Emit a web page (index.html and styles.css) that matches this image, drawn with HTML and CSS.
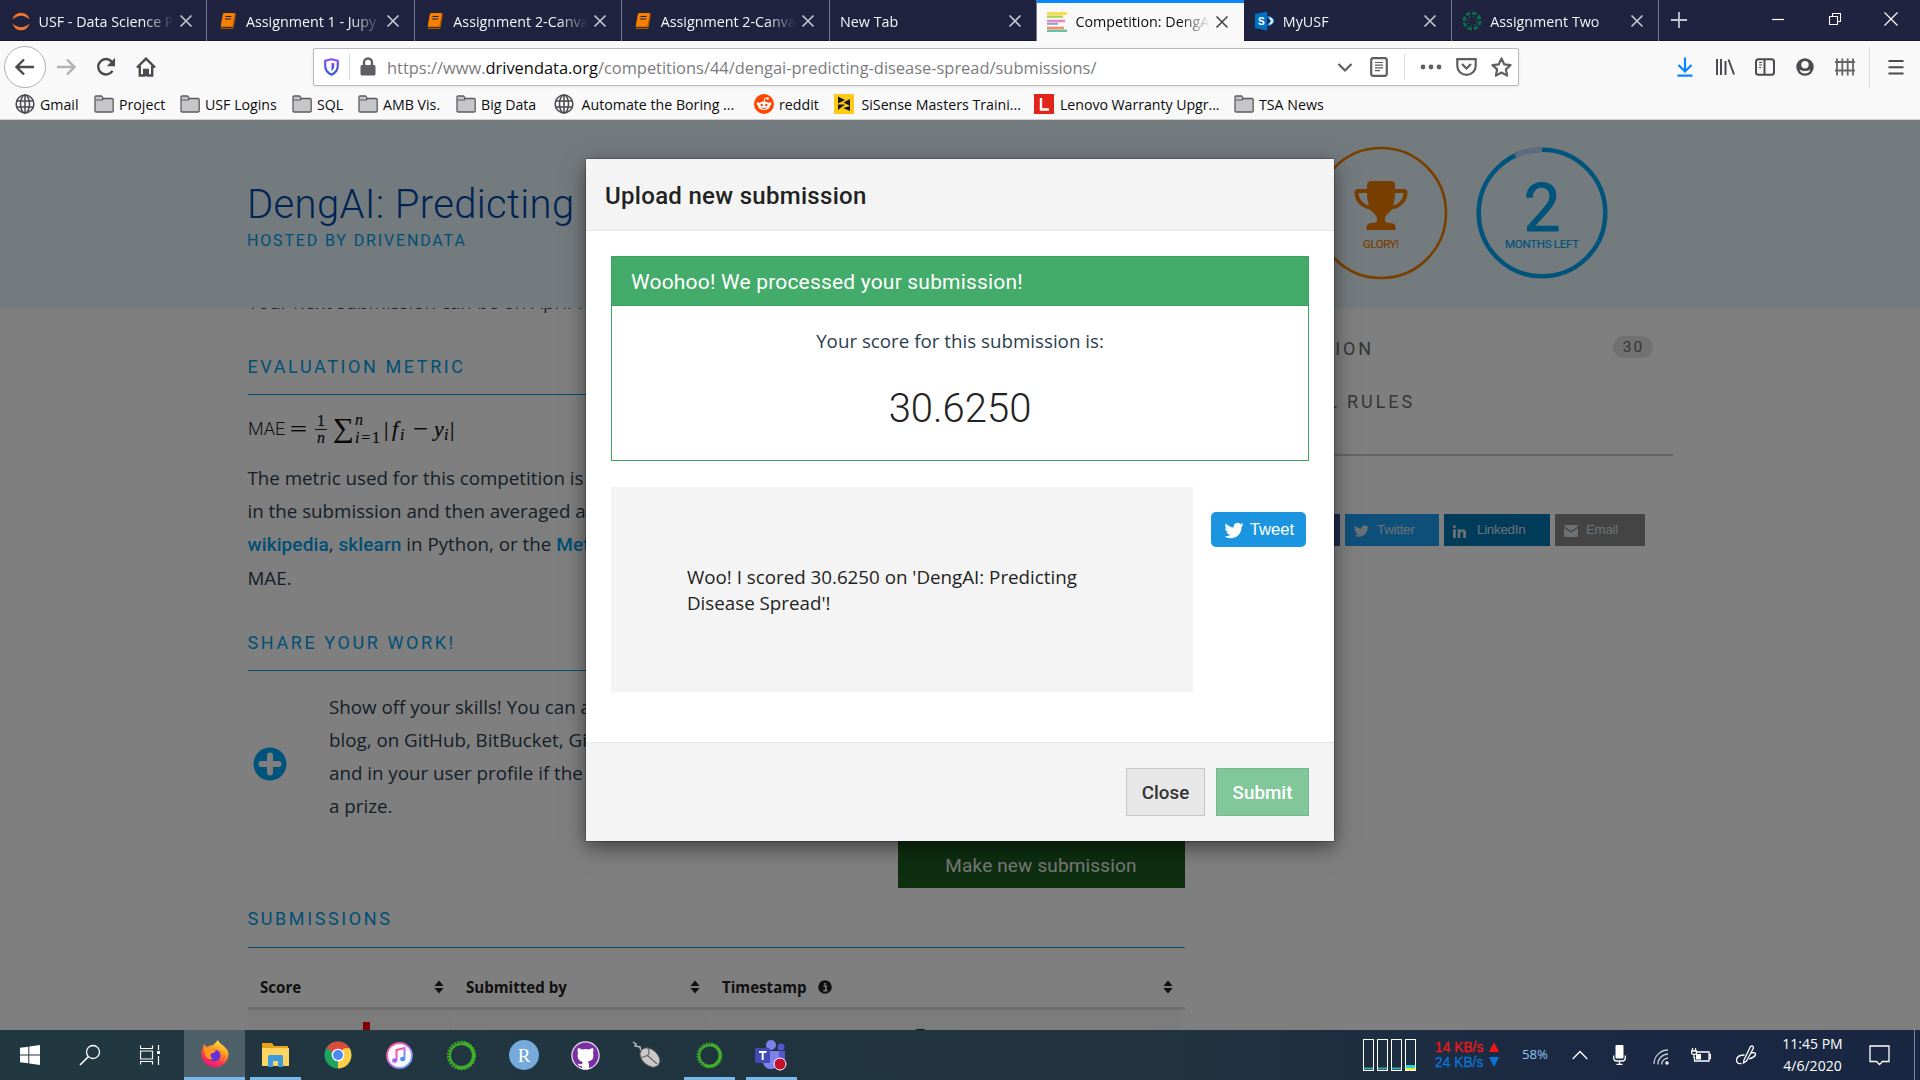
FILE: index.html
```html
<!DOCTYPE html>
<html lang="en">
<head>
<meta charset="utf-8">
<title>Competition: DengAI</title>
<link rel="stylesheet" href="styles.css">
</head>
<body>
<svg class="defs" width="0" height="0" aria-hidden="true">
  <defs>
    <symbol id="x" viewBox="0 0 16 16"><path d="M2.5 2.5l11 11M13.5 2.5l-11 11" fill="none" stroke="currentColor" stroke-width="1.7"/></symbol>
    <symbol id="book" viewBox="0 0 20 20"><g transform="translate(2 0) skewX(-10)"><rect x="3.5" y="2" width="13" height="16" rx="2" fill="#b85c00"/><rect x="3.5" y="2" width="11.5" height="13.5" rx="1" fill="#f77f00"/><path d="M6.5 5.5h6M6.5 8h6" stroke="#202340" stroke-width="1.1"/><path d="M4.5 16.6h10.5" stroke="#202340" stroke-width=".9"/></g></symbol>
    <symbol id="folder" viewBox="0 0 20 20"><path d="M1 17V3q0-1 1-1h5q1 0 1.300.8L9 4.500h9q1.200 0 1.200 1.200V17q0 1-1.200 1H2.200Q1 18 1 17z" fill="#c6c6c8" stroke="#5c5c5f" stroke-width="1.300"/><path d="M1.600 6h6.500l1.400-1.300" fill="none" stroke="#5c5c5f" stroke-width="1.200"/></symbol>
    <symbol id="globe" viewBox="0 0 20 20"><g fill="none" stroke="#4a4a4f" stroke-width="1.500"><circle cx="10" cy="10" r="8.900"/><ellipse cx="10" cy="10" rx="4.500" ry="8.900"/><path d="M10 1v18M1.200 7h17.600M1.200 13h17.600"/></g></symbol>
    <symbol id="bird" viewBox="0 0 24 24"><path fill="currentColor" d="M23.950 4.570a10 10 0 01-2.820.770 4.960 4.960 0 002.160-2.720c-.950.550-2 .960-3.130 1.180a4.920 4.920 0 00-8.380 4.480C7.690 8.090 4.070 6.130 1.640 3.160a4.820 4.820 0 00-.670 2.480c0 1.710.870 3.210 2.190 4.100a4.900 4.900 0 01-2.230-.620v.060a4.920 4.920 0 003.950 4.830 5 5 0 01-2.210.080 4.940 4.940 0 004.600 3.420A9.870 9.870 0 010 19.540a14 14 0 007.550 2.210c9.050 0 14-7.500 14-13.980 0-.210 0-.420-.020-.630a9.940 9.940 0 002.460-2.550z"/></symbol>
    <symbol id="ring" viewBox="0 0 34 34"><circle cx="17" cy="17" r="12.800" fill="none" stroke="#3a9d2c" stroke-width="4.600" stroke-dasharray="2.200 .9"/><circle cx="17" cy="17" r="12" fill="none" stroke="#43b02a" stroke-width="1.600"/><path d="M19 3.500A13.500 13.500 0 1 1 12 29.500A12 12 0 1 0 19 3.500z" fill="#43b02a" stroke="#43b02a" stroke-width="2"/></symbol>
  </defs>
</svg>

<header class="tabs">
  <div class="tab"><svg class="fav" viewBox="0 0 20 20"><path d="M1.500 8.500a8.700 8.700 0 0 1 17 0Q10 1 1.500 8.500zM1.500 12.500a8.700 8.700 0 0 0 17 0Q10 20 1.500 12.500z" fill="#f37726"/></svg><span class="label">USF - Data Science P</span><svg class="close"><use href="#x"/></svg></div>
  <div class="tab"><svg class="fav"><use href="#book"/></svg><span class="label">Assignment 1 - Jupy</span><svg class="close"><use href="#x"/></svg></div>
  <div class="tab"><svg class="fav"><use href="#book"/></svg><span class="label">Assignment 2-Canva</span><svg class="close"><use href="#x"/></svg></div>
  <div class="tab"><svg class="fav"><use href="#book"/></svg><span class="label">Assignment 2-Canva</span><svg class="close"><use href="#x"/></svg></div>
  <div class="tab"><span class="label wide">New Tab</span><svg class="close"><use href="#x"/></svg></div>
  <div class="tab active"><svg class="fav" viewBox="0 0 20 20"><path d="M0 1.500h20" stroke="#fed92f" stroke-width="2.600"/><path d="M0 4.700h16" stroke="#a6d854" stroke-width="2.400"/><path d="M0 9h18" stroke="#e78ac3" stroke-width="2.600"/><path d="M0 11.800h11" stroke="#8da0cb" stroke-width="2"/><path d="M0 16h17" stroke="#fc8d62" stroke-width="2.600"/><path d="M0 18.800h20" stroke="#66c2a5" stroke-width="2.400"/></svg><span class="label">Competition: DengA</span><svg class="close"><use href="#x"/></svg></div>
  <div class="tab"><svg class="fav" viewBox="0 0 20 20"><path d="M0 3l12-2.500v19L0 17z" fill="#0072c6"/><text x="3" y="14" class="fav-letter">S</text><path d="M12.500 5.500c4 0 6 2 6.500 4.500-.5 2.500-2.500 4.500-6.500 4.500l3-4.500z" fill="#dcecf9" stroke="#0072c6"/></svg><span class="label">MyUSF</span><svg class="close"><use href="#x"/></svg></div>
  <div class="tab"><svg class="fav" viewBox="0 0 20 20"><circle cx="10" cy="10" r="8" fill="none" stroke="#0b6e4b" stroke-width="3" stroke-dasharray="4.300 1.980"/><circle cx="10" cy="10" r="4.600" fill="none" stroke="#0b6e4b" stroke-width="1.400" stroke-dasharray="1.400 2.210"/></svg><span class="label">Assignment Two</span><svg class="close"><use href="#x"/></svg></div>
  <svg class="plus" viewBox="0 0 20 20"><path d="M10 1v18M1 10h18" stroke="#c4c5cf" stroke-width="2"/></svg>
  <div class="window-controls">
    <svg viewBox="0 0 14 14"><path d="M1 7.500h12" stroke="#fff" stroke-width="1.200"/></svg>
    <svg viewBox="0 0 14 14"><path d="M1.500 4.500h8v8h-8zM4.500 4V1.500h8v8H10" fill="none" stroke="#fff" stroke-width="1.100"/></svg>
    <svg viewBox="0 0 14 14"><path d="M.5.5l13 13M13.500.5l-13 13" stroke="#fff" stroke-width="1.200"/></svg>
  </div>
</header>

<nav class="toolbar">
  <span class="back"><svg class="i20" viewBox="0 0 20 20"><path d="M19 10H2M9 2.500L1.500 10 9 17.500" class="ln thick"/></svg></span>
  <span class="tool faded"><svg class="i20" viewBox="0 0 20 20"><path d="M1 10h17M11 2.500l7.500 7.500-7.500 7.500" class="ln thick"/></svg></span>
  <span class="tool"><svg class="i20" viewBox="0 0 20 20"><path d="M16.500 13.800A7.700 7.700 0 1 1 16 5" class="ln thick"/><path d="M19 .8v8.400h-8.200z" fill="#4a4a4f"/></svg></span>
  <span class="tool"><svg class="i20" viewBox="0 0 20 20"><path d="M1 10.500L10 1.600l9 8.900M3.800 9v9.500h4.400v-5.500h3.600v5.500h4.400V9" class="ln thick"/><rect x="8.800" y="14" width="2.400" height="5" fill="#4a4a4f"/></svg></span>
  <div class="url">
    <span class="cell w34"><svg width="17" height="18" viewBox="0 0 17 18"><defs><linearGradient id="sh" x1="0" y1="0" x2="0" y2="1"><stop offset="0" stop-color="#8a4dfd"/><stop offset="1" stop-color="#2f57d6"/></linearGradient></defs><path d="M8.500 1.200l6.300 1.600v4.700c0 4.500-2.500 7.500-6.300 9.200C4.700 15 2.200 12 2.200 7.500V2.800z" fill="none" stroke="url(#sh)" stroke-width="2.200" stroke-linejoin="round"/><path d="M8.500 4.800v8.400c1.700-1.300 2.800-3 2.800-5.600V5.300z" fill="url(#sh)"/></svg></span>
    <i class="divider"></i>
    <span class="cell w34"><svg width="16" height="19" viewBox="0 0 16 19"><path d="M4 9V5.500a4 4 0 0 1 8 0V9" fill="none" stroke="#5f5f63" stroke-width="2.400"/><rect x=".5" y="8" width="15" height="10.500" rx="1.500" fill="#5f5f63"/></svg></span>
    <span class="address">https://www.<b>drivendata.org</b>/competitions/44/dengai-predicting-disease-spread/submissions/</span>
    <span class="cell w35"><svg width="16" height="16" viewBox="0 0 16 16"><path d="M1.500 5L8 11.500 14.500 5" class="ln gray"/></svg></span>
    <span class="cell w34"><svg width="18" height="20" viewBox="0 0 18 20"><rect x="1.200" y="1.200" width="15.600" height="17.600" rx="2" class="ln gray"/><path d="M5 5.500h8M5 8.200h8M5 10.900h8M5 13.600h5" stroke="#5f5f63" stroke-width="1.200"/></svg></span>
    <i class="divider spaced"></i>
    <span class="cell w36"><svg width="22" height="6" viewBox="0 0 22 6"><g fill="#5f5f63"><circle cx="3" cy="3" r="2.400"/><circle cx="11" cy="3" r="2.400"/><circle cx="19" cy="3" r="2.400"/></g></svg></span>
    <span class="cell w35"><svg width="21" height="18" viewBox="0 0 21 18"><path d="M1.300 1.200h18.400V8a9.200 8.800 0 0 1-18.400 0zM6 6l4.500 4.500L15 6" class="ln gray"/></svg></span>
    <span class="cell w34"><svg width="21" height="20" viewBox="0 0 21 20"><path d="M10.500 1.500l2.700 5.800 6.300.8-4.600 4.300 1.200 6.200-5.600-3.100-5.600 3.100 1.200-6.200L1.500 8.100l6.300-.8z" class="ln gray" stroke-linejoin="round"/></svg></span>
  </div>
  <div class="right-tools">
    <span class="tool"><svg class="i20" viewBox="0 0 20 20"><path d="M10 .5v14M3.500 8l6.500 6.500L16.500 8M2.500 18.700h15" fill="none" stroke="#0a84ff" stroke-width="2.200"/></svg></span>
    <span class="tool"><svg class="i20" viewBox="0 0 20 20"><path d="M2 2v16M6 2v16M10.500 4v14M13.500 2.500L19 17.500" class="ln"/></svg></span>
    <span class="tool"><svg class="i20" viewBox="0 0 20 20"><rect x="1" y="2.200" width="18" height="15.600" rx="2.500" class="ln"/><path d="M9.500 2v16" class="ln"/><path d="M4 5.500h3M4 8h3M4 10.500h2" stroke="#4a4a4f" stroke-width="1.200"/></svg></span>
    <span class="tool"><svg class="i20" viewBox="0 0 20 20"><circle cx="10" cy="10" r="8.700" fill="#4a4a4f"/><circle cx="10" cy="7.800" r="3.700" fill="#f9f9fa"/><path d="M4.500 12.500q1 4 5.500 4t5.500-4q-2.500 1.500-5.500 1.500t-5.500-1.500z" fill="#f9f9fa"/></svg></span>
    <span class="tool"><svg class="i20" viewBox="0 0 20 20"><path d="M2 1.500v17M7.300 1.500v17M12.700 1.500v17M18 1.500v17M0 5h20M0 13.500h20" stroke="#66666a" stroke-width="1.800"/></svg></span>
    <i class="divider tall"></i>
    <span class="tool"><svg width="16" height="16" viewBox="0 0 16 16"><path d="M.5 2h15M.5 8.200h15M.5 14.500h15" class="ln"/></svg></span>
  </div>
</nav>

<nav class="bookmarks">
  <span><svg><use href="#globe"/></svg>Gmail</span>
  <span><svg><use href="#folder"/></svg>Project</span>
  <span><svg><use href="#folder"/></svg>USF Logins</span>
  <span><svg><use href="#folder"/></svg>SQL</span>
  <span><svg><use href="#folder"/></svg>AMB Vis.</span>
  <span><svg><use href="#folder"/></svg>Big Data</span>
  <span class="site"><svg><use href="#globe"/></svg>Automate the Boring ...</span>
  <span><svg viewBox="0 0 20 20"><circle cx="10" cy="10" r="10" fill="#ff4500"/><ellipse cx="10" cy="11.800" rx="6" ry="4.300" fill="#fff"/><circle cx="4.200" cy="9.800" r="1.600" fill="#fff"/><circle cx="15.800" cy="9.800" r="1.600" fill="#fff"/><circle cx="13.700" cy="4.500" r="1.300" fill="#fff"/><path d="M10 8l.8-4 3 .7" fill="none" stroke="#fff"/><circle cx="7.700" cy="11" r="1.200" fill="#ff4500"/><circle cx="12.300" cy="11" r="1.200" fill="#ff4500"/><path d="M7.500 13.800q2.500 1.600 5 0" fill="none" stroke="#ff4500"/></svg>reddit</span>
  <span class="site"><svg viewBox="0 0 20 20"><rect width="20" height="20" fill="#ffc915"/><path d="M4 2.500l7 3.500-7 3.500zM16 5v7L9.500 8.500zM4 10.500h7L4 16zM9 14l7-2v5z" fill="#191919"/></svg>SiSense Masters Traini...</span>
  <span class="site tight"><svg viewBox="0 0 20 20"><rect width="20" height="20" fill="#e1251b"/><path d="M7 4v11.500h8" fill="none" stroke="#fff" stroke-width="2.400"/></svg>Lenovo Warranty Upgr...</span>
  <span><svg><use href="#folder"/></svg>TSA News</span>
</nav>

<main class="viewport">
  <section class="banner">
    <div class="heading">
      <h1>DengAI: Predicting</h1>
      <p class="host">HOSTED BY DRIVENDATA</p>
    </div>
    <div class="badges">
      <svg width="134" height="134" viewBox="0 0 134 134"><circle cx="67" cy="67" r="65" fill="none" stroke="#f08000" stroke-width="2.600"/>
        <path fill="#ee7c00" d="M57.500 35h19q4.500 0 4.500 4.500V43h9q3.500 0 3.500 3.500c0 9-6.500 15.500-15.500 17-3 3.500-7 5.500-7 9.500 0 4.500 2 3.500 6 4 3 .5 4.500 2 4.500 4.500V84h-29v-2.500c0-2.500 1.500-4 4.500-4.500 4-.5 6 .5 6-4 0-4-4-6-7-9.500-9-1.500-15.500-8-15.500-17Q40.500 43 44 43h9v-3.500q0-4.500 4.500-4.500zM44.500 47c.5 6 4 11 10.500 12.500-1.500-4-2-8-2-12.500zM89.500 47H81c0 4.500-.5 8.500-2 12.500C85.500 58 89 53 89.500 47z"/>
        <text x="67" y="102" class="badge-text orange" textLength="36">GLORY!</text></svg>
      <svg width="134" height="134" viewBox="0 0 134 134"><circle cx="67" cy="67" r="63.300" fill="none" stroke="#00a6f5" stroke-width="4.500"/><path d="M40.300 9.600A63.300 63.300 0 0 1 67 3.700" fill="none" stroke="#b9d8ff" stroke-width="4.700"/>
        <text x="67" y="84.500" class="days">2</text>
        <text x="67" y="101.500" class="badge-text blue" textLength="74">MONTHS LEFT</text></svg>
    </div>
  </section>

  <div class="columns">
    <article class="content">
      <p class="next">Your next submission can be on April 7</p>
      <h2>EVALUATION METRIC</h2>
      <svg class="formula" width="220" height="40" viewBox="0 0 220 40">
        <text x="0" y="27" class="mae">MAE</text>
        <text x="42" y="28" class="math" textLength="17" lengthAdjust="spacingAndGlyphs">=</text>
        <text x="69" y="18" class="math small">1</text><path d="M67 21.500h12" stroke="#222"/><text x="69" y="35" class="math small it">n</text>
        <text x="85" y="29" class="math sum" textLength="21" lengthAdjust="spacingAndGlyphs">∑</text>
        <text x="107" y="17" class="math small it">n</text><text x="107" y="35" class="math small" textLength="25"><tspan class="it">i</tspan>=1</text>
        <text x="136" y="28" class="math">|</text><text x="144" y="28" class="math it">f</text><text x="152" y="32" class="math small it">i</text>
        <text x="165" y="28" class="math" textLength="15" lengthAdjust="spacingAndGlyphs">−</text><text x="186" y="28" class="math it">y</text><text x="196" y="32" class="math small it">i</text><text x="202" y="28" class="math">|</text>
      </svg>
      <p class="body">The metric used for this competition is<br>in the submission and then averaged a<br><a>wikipedia</a>, <a>sklearn</a> in Python, or the <a>Met</a><br>MAE.</p>
      <h2 class="second">SHARE YOUR WORK!</h2>
      <div class="share-row">
        <svg width="34" height="34" viewBox="0 0 34 34"><circle cx="17" cy="17" r="16.500" fill="#00a6f5"/><path d="M17 8.500v17M8.500 17h17" stroke="#fff" stroke-width="6" stroke-linecap="round"/></svg>
        <p class="body">Show off your skills! You can a<br>blog, on GitHub, BitBucket, Gi<br>and in your user profile if the<br>a prize.</p>
      </div>
      <button class="make">Make new submission</button>
      <h2 class="third">SUBMISSIONS</h2>
      <div class="table">
        <div class="th">Score<svg width="10" height="14" viewBox="0 0 10 14"><path d="M5 .5L9.600 6H.4zM5 13.500L9.600 8H.4z"/></svg></div>
        <div class="th">Submitted by<svg width="10" height="14" viewBox="0 0 10 14"><path d="M5 .5L9.600 6H.4zM5 13.500L9.600 8H.4z"/></svg></div>
        <div class="th">Timestamp<svg class="info" width="14" height="14" viewBox="0 0 14 14"><circle cx="7" cy="7" r="6.800"/><path d="M5.500 6H8v4.500M5.300 10.700h4M7 3v1.700" fill="none" stroke="#fff" stroke-width="1.600"/></svg><svg class="last" width="10" height="14" viewBox="0 0 10 14"><path d="M5 .5L9.600 6H.4zM5 13.500L9.600 8H.4z"/></svg></div>
        <div class="td"><i class="mark"></i></div>
        <div class="td"></div>
        <div class="td"><i class="curl"></i></div>
      </div>
    </article>

    <aside class="sidebar">
      <div class="side-link"><span class="short">ION</span><em>30</em></div>
      <div class="side-link"><span class="long">L RULES</span></div>
      <hr>
      <div class="share">
        <span class="fb"></span>
        <span class="tw"><svg width="15" height="14" viewBox="0 0 24 24" preserveAspectRatio="none"><use href="#bird"/></svg>Twitter</span>
        <span class="li"><svg width="13" height="13" viewBox="0 0 13 13"><path d="M0 4.300h2.800V13H0zM4.600 4.300h2.700v1.200c1.200-2 5.700-2 5.700 2V13h-2.800V8.500c0-2.400-2.800-2.200-2.800 0V13H4.600z" fill="currentColor"/><circle cx="1.400" cy="1.500" r="1.500" fill="currentColor"/></svg>LinkedIn</span>
        <span class="em"><svg width="14" height="12" viewBox="0 0 14 12"><path d="M1.500 0h11Q14 0 14 1.500L7 6 0 1.500Q0 0 1.500 0zM0 3.200L7 7.700l7-4.500v7.300Q14 12 12.500 12h-11Q0 12 0 10.500z" fill="currentColor"/></svg>Email</span>
      </div>
    </aside>
  </div>

  <div class="backdrop">
    <section class="modal">
      <h3>Upload new submission</h3>
      <div class="modal-body">
        <div class="panel">
          <div class="panel-head">Woohoo! We processed your submission!</div>
          <p class="score-label">Your score for this submission is:</p>
          <p class="score">30.6250</p>
        </div>
        <div class="tweet-row">
          <p class="quote">Woo! I scored 30.6250 on 'DengAI: Predicting<br>Disease Spread'!</p>
          <button class="tweet"><svg width="20" height="19"><use href="#bird"/></svg>Tweet</button>
        </div>
      </div>
      <footer>
        <button class="btn-close">Close</button>
        <button class="btn-submit">Submit</button>
      </footer>
    </section>
  </div>
</main>

<footer class="taskbar">
  <div class="launch">
    <span class="sys"><svg width="20" height="20" viewBox="0 0 20 20"><path d="M0 2.800L8.300 1.700v7.800H0zM9.300 1.500L20 0v9.500H9.300zM0 10.500h8.300v7.800L0 17.200zM9.300 10.500H20V20L9.300 18.500z" fill="#fff"/></svg></span>
    <span class="sys"><svg width="22" height="22" viewBox="0 0 22 22"><circle cx="14" cy="8" r="6.500" fill="none" stroke="#fff" stroke-width="1.300"/><path d="M9.500 12.500L1 21" stroke="#fff" stroke-width="1.600"/></svg></span>
    <span class="sys"><svg width="20" height="20" viewBox="0 0 20 20"><path d="M.5.5v3h12v-3M.5 19.500v-3h12v3M.5 6h12v8H.5zM18.500 0v5M18.500 11v9" fill="none" stroke="#fff" stroke-width="1.200"/><rect x="17" y="6" width="3" height="3" fill="#fff"/></svg></span>
    <span class="app current"><svg width="30" height="30" viewBox="0 0 30 30"><defs><linearGradient id="ff" x1=".8" y1="0" x2=".3" y2="1"><stop offset="0" stop-color="#fff44f"/><stop offset=".35" stop-color="#ffa420"/><stop offset=".7" stop-color="#ff3a4c"/><stop offset="1" stop-color="#e31587"/></linearGradient></defs><path d="M18 0c1 4 8 6 10.300 12A13.500 13.500 0 1 1 2 10l2-6 2.500 3L10 5.500c3 .5 4.500-2 8-5.500z" fill="url(#ff)"/><circle cx="14.500" cy="15.500" r="6" fill="#6a2fd8"/><path d="M4 8q5-2 7 1l5 1q-1 3-5 3.500-1.500 4 2 5.500-7 1-8-5z" fill="#ff9a1f"/></svg></span>
    <span class="app open"><svg width="29" height="26" viewBox="0 0 29 26"><path d="M1 1h10l2 3h14v7H1z" fill="#e8a317"/><rect x="1" y="6" width="27" height="18" fill="#fcd462"/><path d="M7 25V14.500q0-1.500 1.500-1.500h12q1.500 0 1.500 1.500V25h-5v-6h-5v6z" fill="#3f9be0"/></svg></span>
    <span class="app"><svg width="28" height="28" viewBox="0 0 28 28"><circle cx="14" cy="14" r="13.500" fill="#1da462"/><path d="M14 14L2.300 7.300A13.500 13.500 0 0 1 25.700 7.300z" fill="#dd4b3e"/><path d="M14 14l6-6.700h5.700A13.500 13.500 0 0 1 14 27.500z" fill="#ffcd46"/><circle cx="14" cy="14" r="6.300" fill="#fff"/><circle cx="14" cy="14" r="5" fill="#4a8af4"/></svg></span>
    <span class="app"><svg width="27" height="27" viewBox="0 0 27 27"><defs><linearGradient id="it" x1="0" y1="0" x2="1" y2="1"><stop offset="0" stop-color="#ff4f7b"/><stop offset=".5" stop-color="#c868f0"/><stop offset="1" stop-color="#3db8f7"/></linearGradient></defs><circle cx="13.500" cy="13.500" r="12.500" fill="#fbf7fb" stroke="url(#it)" stroke-width="1.800"/><path d="M10.500 18V8l8-2v10.500" fill="none" stroke="url(#it)" stroke-width="2"/><ellipse cx="8.700" cy="18.500" rx="2.600" ry="2.200" fill="#b060ee"/><ellipse cx="16.700" cy="17" rx="2.600" ry="2.200" fill="#4b8ff5"/></svg></span>
    <span class="app"><svg width="33" height="33"><use href="#ring"/></svg></span>
    <span class="app"><svg width="30" height="30" viewBox="0 0 30 30"><circle cx="15" cy="15" r="15" fill="#75aadb"/><text x="15" y="21.500" class="r-logo">R</text></svg></span>
    <span class="app"><svg width="29" height="29" viewBox="0 0 29 29"><circle cx="14.500" cy="14.500" r="13.600" fill="#7b2fa5" stroke="#e9dcf1" stroke-width="1.300"/><path d="M7 7q2 0 4 1.500 3.500-1 7 0Q20 7 22 7q1 3 0 4.500 2 8-5 9 1 1.500 1 3.500v4q-3.500 1-7 0v-3q-3 1-4.500-2.500 2.500 1 4.700.500l.5-2q-6.700-2-4.700-9.500Q6 10 7 7z" fill="#fff"/></svg></span>
    <span class="app"><svg width="30" height="30" viewBox="0 0 30 30"><path d="M1 2l3 2-1 2 5 1 1 4" fill="none" stroke="#b9b9b9" stroke-width="1.500"/><ellipse cx="18" cy="17.500" rx="11.500" ry="8" transform="rotate(42 18 17.500)" fill="#c9c9c9" stroke="#444"/><path d="M15.500 7.500q3 5 0 8l-6 2M15.500 15.500l9.500 8.500" fill="none" stroke="#666" stroke-width="1.200"/></svg></span>
    <span class="app open"><svg width="29" height="29"><use href="#ring"/></svg></span>
    <span class="app open"><svg width="33" height="32" viewBox="0 0 33 32"><circle cx="16" cy="6" r="5" fill="#7b83eb"/><circle cx="26" cy="8" r="3.500" fill="#5059c9"/><path d="M18 12h12v10q-2 6-8 5z" fill="#5059c9"/><path d="M8 12h16v12q-2 6-8 6t-8-6z" fill="#7b83eb"/><rect y="9" width="15" height="15" rx="1.500" fill="#4149b8"/><path d="M4 13h7.500M7.700 13v8" stroke="#fff" stroke-width="2"/><circle cx="25" cy="25" r="6" fill="#c50f2f" stroke="#fff"/></svg></span>
  </div>
  <div class="tray">
    <svg class="meters" width="54" height="32" viewBox="0 0 54 32"><g fill="none" stroke="#fff"><rect x=".5" y=".5" width="10" height="31"/><rect x="14.500" y=".5" width="10" height="31"/><rect x="28.500" y=".5" width="10" height="31"/><rect x="42.500" y=".5" width="10" height="31"/></g><path d="M1 29.500h9M15 29.500h9M29 29.500h9" stroke="#3aa89c" stroke-width="2"/><path d="M43 27.500h9" stroke="#22d8d8" stroke-width="3"/><path d="M43 30h9" stroke="#e8ef20" stroke-width="2"/></svg>
    <div class="net"><span class="up">14 KB/s<svg width="10" height="10" viewBox="0 0 10 10"><path d="M5 0l5 10H0z" fill="currentColor"/></svg></span><span class="down">24 KB/s<svg width="10" height="10" viewBox="0 0 10 10"><path d="M5 10L0 0h10z" fill="currentColor"/></svg></span></div>
    <span class="percent">58%</span>
    <svg class="t-up" width="16" height="10" viewBox="0 0 16 10"><path d="M.7 9L8 1.500 15.300 9" class="white"/></svg>
    <svg class="t-mic" width="13" height="20" viewBox="0 0 13 20"><rect x="2.500" y="0" width="8" height="13.500" rx="1" fill="#fff"/><path d="M.7 10.500v2.500q0 3 3 3h5.600q3 0 3-3v-2.500M6.500 16v3.300M3.500 19.300h6" class="white"/></svg>
    <svg class="t-wifi" width="16" height="16" viewBox="0 0 16 16"><path d="M1 15A14 14 0 0 1 15 1M4.800 15.500A10.500 10.500 0 0 1 15 5M8.500 15.500A7 7 0 0 1 15 9" class="white dim"/><circle cx="14" cy="14" r="1.700" fill="#fff"/></svg>
    <svg class="t-bat" width="20" height="15" viewBox="0 0 20 15"><path d="M5 4h13v9H3.500V9M18.500 6.500h1v4h-1M1.500 0v3M4.500 0v3M.5 3h5v2.500q-2.500 2-5 0zM3 6.500V10" class="white"/><rect x="5" y="6" width="5" height="5.500" fill="#fff"/></svg>
    <svg class="t-pen" width="21" height="20" viewBox="0 0 21 20"><path d="M8 15L14.500 1.500q2.500-1.500 3 1.500L10.500 16l-3 2zM8.500 10q-7 0-8 4.500 0 5 5 4M15 8q5-1 4.500 1.500T13 14" class="white"/></svg>
    <div class="clock"><span>11:45 PM</span><span>4/6/2020</span></div>
    <svg class="t-note" width="21" height="21" viewBox="0 0 21 21"><path d="M1 1h19v15.500h-6.500l-3 3-3-3H1z" class="white"/></svg>
  </div>
</footer>
</body>
</html>
```
FILE: styles.css
```css
* { box-sizing: border-box; }
body { margin: 0; width: 1920px; height: 1080px; overflow: hidden; display: flex; flex-direction: column; font-family: "Open Sans", "Noto Sans", sans-serif; background: #fff; }
h1, h2, h3, p { margin: 0; font-weight: 400; }
button { font: inherit; padding: 0; border: 0; }
svg { display: block; flex: none; }
.defs { position: absolute; }
.ln { fill: none; stroke: #4a4a4f; stroke-width: 2; }
.thick { stroke-width: 2.4; }
.gray { stroke: #5f5f63; stroke-width: 2.2; }
.white { fill: none; stroke: #fff; stroke-width: 1.3; }
.dim { stroke: #c5cad3; }

/* browser tabs */
.tabs { height: 41px; flex: none; display: flex; align-items: center; background: #202340; border-bottom: 1px solid #14162c; }
.tab { width: 207.4px; height: 41px; flex: none; display: flex; align-items: center; padding: 2px 0 0 10.500px; border-right: 1px solid #74768c; color: #f4f4f8; font-size: 14.300px; }
.fav { width: 20px; height: 20px; margin-right: 8px; }
.fav-letter { font: 700 10px "Liberation Sans", sans-serif; fill: #fff; }
.label { width: 134px; overflow: hidden; white-space: nowrap; -webkit-mask-image: linear-gradient(90deg, #000 105px, transparent 135px); mask-image: linear-gradient(90deg, #000 105px, transparent 135px); }
.label.wide { width: 162px; }
.close { width: 16px; height: 16px; margin-left: 5px; color: #c4c5cf; }
.tab.active { background: #f9f9fa; color: #0c0c0d; border-right: 0; padding-top: 0; border-top: 3px solid #0a84ff; }
.active .close { color: #4a4a4f; }
.plus { width: 18px; height: 18px; margin-left: 11px; }
.window-controls { display: flex; gap: 42.500px; margin: 0 22px 2px auto; }
.window-controls svg { width: 14px; height: 14px; }

/* navigation bar */
.toolbar { height: 49px; flex: none; display: flex; align-items: center; padding: 2px 4px 0; background: #f9f9fa; }
.back { width: 42px; height: 42px; display: grid; place-items: center; border: 1px solid #b1b1b3; border-radius: 50%; background: #fff; }
.i20 { width: 20px; height: 20px; }
.tool { width: 40px; display: grid; place-items: center; }
.faded { opacity: .4; }
.url { width: 1206px; height: 38px; margin-left: 147px; display: flex; align-items: center; background: #fff; border: 1px solid #b9b9bb; border-radius: 2px; box-shadow: 0 1px 3px rgba(0,0,0,.08); }
.cell { display: grid; place-items: center; flex: none; }
.w34 { width: 34px; }
.w35 { width: 35px; }
.w36 { width: 36px; }
.divider { width: 1px; height: 26px; background: #dcdcde; margin: 0 1px; }
.divider.spaced { margin: 0 8px; }
.divider.tall { height: 42px; margin: 0 6px 0 4px; }
.address { flex: 1; padding-left: 2px; padding-top: 2px; font-size: 16.430px; color: #7c7c80; white-space: nowrap; }
.address b { font-weight: 400; color: #0c0c0d; }
.right-tools { margin-left: auto; display: flex; align-items: center; }

.bookmarks { height: 30px; flex: none; display: grid; grid-template-columns: 79px 86px 112px 66px 98px 98px 200px 80px 200px 200px 120px; align-items: center; padding: 0 0 1px 15px; background: #f9f9fa; border-bottom: 1px solid #cfcfd1; font-size: 14.200px; color: #0c0c0d; white-space: nowrap; }
.bookmarks span { display: flex; align-items: center; gap: 5px; }
.bookmarks .site { gap: 7.500px; }
.bookmarks .tight { gap: 6px; letter-spacing: -.05px; }
.bookmarks svg { width: 20px; height: 20px; }

/* page */
.viewport { position: relative; height: 910px; flex: none; overflow: hidden; background: #fff; color: #2c3e50; }
.banner { position: relative; z-index: 1; height: 188px; display: flex; background: #e8f6fc; padding: 26px 0 0 247px; }
.heading { width: 1067px; padding-top: 35px; }
h1 { font: 300 40px/48px Roboto, sans-serif; letter-spacing: .35px; color: #004aa8; }
.host { font: 400 16px/22px Roboto, sans-serif; letter-spacing: 1.850px; color: #00a0ec; margin-top: 1px; }
.badges { display: flex; gap: 26.500px; }
.badge-text { font: 400 11.500px Roboto, sans-serif; text-anchor: middle; }
.orange { fill: #f08000; stroke: #f08000; stroke-width: .2px; }
.blue { fill: #00a6f5; stroke: #00a6f5; stroke-width: .2px; }
.days { font: 400 66px Roboto, sans-serif; text-anchor: middle; fill: #00a6f5; stroke: #00a6f5; stroke-width: .8px; }

.columns { display: flex; padding-left: 247.500px; }
.content { width: 937px; margin-top: -23px; }
.next, .body { font-size: 18.750px; line-height: 33px; }
h2 { height: 40px; margin-top: 37px; border-bottom: 1px solid #009fe8; font: 400 18px/24px Roboto, sans-serif; letter-spacing: 2.600px; color: #00a0ec; }
h2.second { margin-top: 37px; }
h2.third { margin-top: 19px; height: 41px; }
.formula { margin: 13px 0; color: #222; }
.mae { font: 300 18px Roboto, sans-serif; fill: #222; }
.math { font: 22px "Liberation Serif", serif; fill: #111; stroke: #111; stroke-width: .2px; }
.small { font-size: 16px; }
.sum { font-size: 27px; }
.it { font-style: italic; }
.body a { font: 500 19px/32px Roboto, sans-serif; color: #009fe8; letter-spacing: .1px; }
.share-row { display: flex; align-items: center; margin-top: 19px; }
.share-row svg { margin: 16px 42px 0 5.500px; }
.make { display: block; width: 287px; height: 50px; margin: 16px 0 0 auto; padding-top: 4px; background: #1c5c20; color: #e8efe8; font: 400 19px Roboto, sans-serif; letter-spacing: .15px; }
.table { display: grid; grid-template-columns: 206px 256px 475px; }
.th { height: 62px; display: flex; align-items: center; padding: 18px 10px 0 12.500px; border-bottom: 3px solid #dcdcdc; font-size: 15.100px; font-weight: 700; color: #222; }
.th svg { margin-left: auto; fill: #222; }
.th svg.info { margin-left: 11px; }
.th svg.last { margin-right: 2px; }
.td { height: 60px; display: flex; align-items: flex-start; background: #f9f9f9; border-right: 2px solid #fff; }
.mark { width: 7px; height: 20px; margin: 12px 0 0 115px; background: #f00; }
.curl { width: 11px; height: 12px; margin: 19px 0 0 205px; border: 2px solid #222; border-radius: 3px; }

.sidebar { margin: 23px 0 0 61.500px; width: 427px; }
.side-link { height: 32px; margin-bottom: 21px; display: flex; align-items: center; font: 400 18px/32px Roboto, sans-serif; letter-spacing: 2.900px; color: #6c6c6c; }
.short { width: 128px; text-align: right; padding-top: 3px; }
.long { width: 169px; text-align: right; padding-top: 3px; }
.side-link em { margin: -1px 20px 0 auto; width: 40px; height: 22px; border-radius: 11px; background: #e2e2e2; font: 400 15.500px/23px Roboto, sans-serif; letter-spacing: 2px; text-align: center; padding-left: 1px; }
.sidebar hr { height: 2px; border: 0; background: #c9c9c9; margin: 38px 0 58px; }
.share { display: flex; gap: 5px; height: 32px; margin-left: 12px; }
.share span { display: flex; align-items: center; color: #d9e2ea; font: 13.300px "Liberation Sans", sans-serif; letter-spacing: -.25px; padding-left: 9px; padding-bottom: 1px; }
.share svg { margin-right: 8px; margin-top: 3px; }
.fb { width: 82px; background: #3b5998; }
.tw { width: 94px; background: #1da1f2; }
.li { width: 106px; background: #0077b5; }
.li svg { margin-right: 11px; }
.em { width: 90px; background: #888; }

/* dialog */
.backdrop { position: absolute; inset: 0; z-index: 2; padding-top: 39px; background: rgba(0,0,0,.5); }
.modal { width: 748px; height: 682px; margin: 0 auto; display: flex; flex-direction: column; background: #fff; box-shadow: 0 0 0 1px rgba(0,0,0,.2), 0 6px 19px rgba(0,0,0,.5); color: #222; }
.modal h3 { height: 72px; padding: 2px 19px 0; background: #f4f4f4; border-bottom: 1px solid #e4e4e4; font: 500 24px/71px Roboto, sans-serif; letter-spacing: .3px; }
.modal-body { height: 511px; padding: 25px; }
.panel { height: 205px; border: 1px solid #3c9f61; text-align: center; }
.panel-head { height: 49px; padding-left: 19px; background: #43ac6a; border-bottom: 1px solid #3c9f61; color: #fff; font: 400 21px/50px Roboto, sans-serif; letter-spacing: .19px; text-align: left; }
.score-label { margin-top: 18px; font-size: 18.750px; line-height: 34px; color: #2c3e50; }
.score { margin-top: 27px; font: 300 40px/48px Roboto, sans-serif; }
.tweet-row { display: flex; margin-top: 26px; }
.quote { width: 582px; height: 205px; padding: 77px 0 0 76px; background: #f4f4f4; font-size: 18.750px; line-height: 26px; }
.tweet { width: 95px; height: 35px; margin: 25px 0 0 18px; display: flex; align-items: center; justify-content: center; gap: 6px; padding: 1px 0 0 1px; border-radius: 5px; background: #1b95e0; color: #fff; font: 16.700px "Liberation Sans", sans-serif; }
.modal footer { height: 99px; display: flex; justify-content: flex-end; gap: 11px; padding: 25px; background: #f4f4f4; border-top: 1px solid #e4e4e4; font: 500 18.800px Roboto, sans-serif; }
.modal footer button { padding-top: 2px; }
.btn-close { width: 79px; height: 48px; background: #e7e7e7; border: 1px solid #c6c6c6; color: #333; }
.btn-submit { width: 93px; height: 48px; background: #82c79a; border: 1px solid #74b98b; color: #fff; }

/* taskbar */
.taskbar { height: 50px; flex: none; display: flex; justify-content: space-between; background: linear-gradient(90deg, #223841, #20333f 60%, #1a2843 85%, #1a2743); }
.launch, .tray { display: flex; }
.launch span { height: 50px; display: grid; place-items: center; }
.sys { width: 60px; }
.launch .current { width: 61px; margin: 0 0 0 4px; background: #4e6068; box-shadow: inset 0 -3px #76b9ed; }
.app { width: 61.900px; }
.open { background: linear-gradient(#76b9ed, #76b9ed) 50% 100% / 51px 3px no-repeat; }
.r-logo { font: 19px "Liberation Serif", serif; fill: #fff; text-anchor: middle; }
.tray { width: 557px; align-items: center; color: #fff; }
.net { margin-left: 18px; width: 64px; display: flex; flex-direction: column; font: 400 13.800px/15px "Liberation Sans", sans-serif; -webkit-text-stroke: .3px; padding-bottom: 1px; white-space: nowrap; }
.net span { display: flex; align-items: center; justify-content: space-between; }
.up { color: #f01818; }
.down { color: #0a74d8; }
.percent { margin-left: 23px; width: 34px; font-size: 13.200px; color: #8cc4f5; padding-bottom: 2px; }
.t-up { margin-left: 16px; }
.t-mic { margin-left: 25px; }
.t-wifi { margin-left: 27px; margin-top: 3px; }
.t-bat { margin-left: 21.500px; }
.t-pen { margin-left: 25px; }
.clock { margin-left: 21px; width: 70px; display: flex; flex-direction: column; text-align: center; font-size: 14px; line-height: 22.500px; }
.t-note { margin-left: 21px; }
.tray::after { content: ""; width: 1px; height: 50px; margin-left: 24px; background: #7d8798; }
```
